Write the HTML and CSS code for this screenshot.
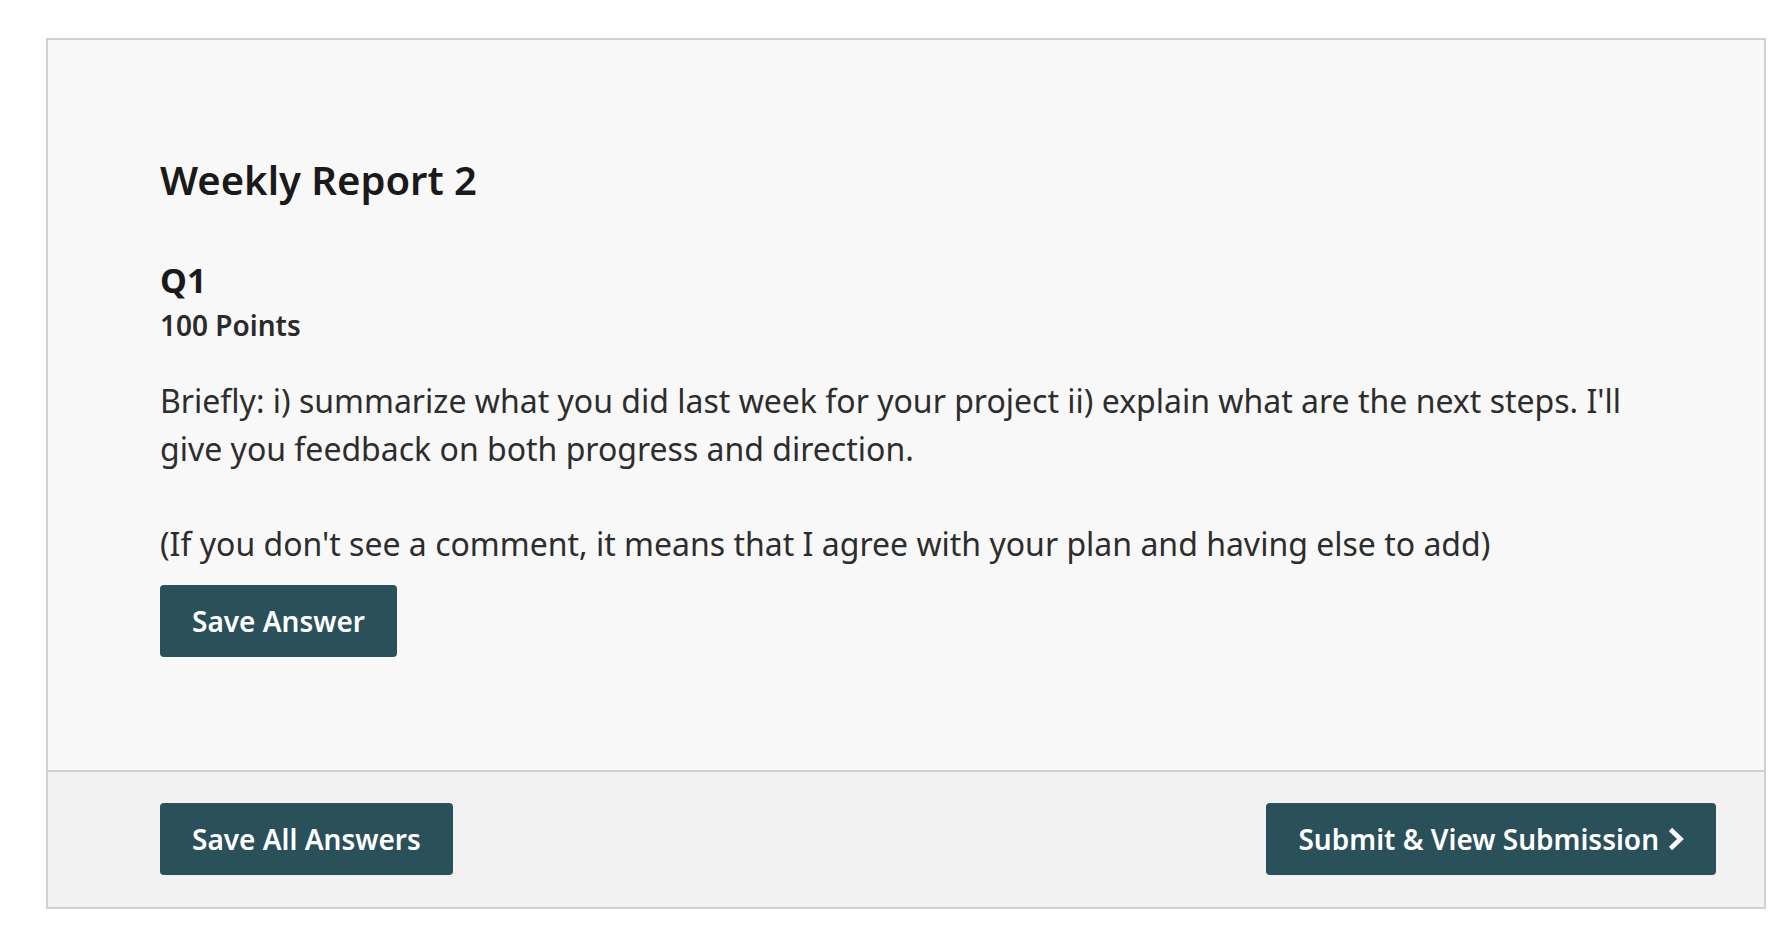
FILE: index.html
```html
<!DOCTYPE html>
<html lang="en">
<head>
<meta charset="utf-8">
<title>Weekly Report 2</title>
<link rel="stylesheet" href="styles.css">
</head>
<body>
<main class="card">
  <section class="card-body">
    <h1 class="title">Weekly Report 2</h1>
    <div class="question">
      <h2 class="q-title">Q1</h2>
      <div class="q-points">100 Points</div>
      <div class="q-prompt">
        <p>Briefly: i) summarize what you did last week for your project ii) explain what are the next steps. I'll give you feedback on both progress and direction.</p>
        <p>(If you don't see a comment, it means that I agree with your plan and having else to add)</p>
      </div>
      <button class="btn" type="button">Save Answer</button>
    </div>
  </section>
  <footer class="card-footer">
    <button class="btn" type="button">Save All Answers</button>
    <button class="btn" type="button">Submit &amp; View Submission
      <svg class="chev" viewBox="0 0 16 24" aria-hidden="true"><path d="M2.5 2.5 L12.5 12 L2.5 21.5" fill="none" stroke="#fff" stroke-width="4.6" stroke-linecap="butt" stroke-linejoin="miter"/></svg>
    </button>
  </footer>
</main>
</body>
</html>
```

FILE: styles.css
```css
html, body {
  margin: 0;
  padding: 0;
  background: #ffffff;
}

body {
  font-family: "Noto Sans", "Open Sans", "Liberation Sans", sans-serif;
  color: #2d2d2d;
}

.card {
  margin: 38px 0 0 46px;
  width: 1720px;
  box-sizing: border-box;
  border: 2px solid #d0d0d0;
  background: #f8f8f8;
}

.card-body {
  padding: 116px 112px 113px 112px;
}

.title {
  margin: 0;
  font-size: 40px;
  line-height: 48px;
  font-weight: 600;
  color: #1a1a1a;
}

.question {
  margin-top: 56px;
}

.q-title {
  margin: 0;
  font-size: 34px;
  line-height: 40px;
  font-weight: 700;
  color: #1a1a1a;
}

.q-points {
  margin-top: 8px;
  font-size: 28px;
  line-height: 34px;
  font-weight: 600;
  color: #2a2a2a;
}

.q-prompt {
  margin-top: 35px;
  font-size: 32px;
  line-height: 48px;
  color: #2d2d2d;
}

.q-prompt p {
  margin: 0 0 47px 0;
}

.q-prompt p:last-child {
  margin-bottom: 0;
}

.btn {
  display: inline-flex;
  align-items: center;
  gap: 9px;
  margin-top: 17px;
  height: 72px;
  padding: 0 32px;
  border: 0;
  border-radius: 4px;
  background: #2a505a;
  color: #ffffff;
  font-family: "Noto Sans", "Open Sans", "Liberation Sans", sans-serif;
  font-size: 28px;
  font-weight: 600;
  cursor: pointer;
}

.card-footer {
  display: flex;
  justify-content: space-between;
  align-items: center;
  padding: 31px 48px 32px 112px;
  border-top: 2px solid #d0d0d0;
  background: #f2f2f2;
}

.card-footer .btn {
  margin-top: 0;
}

.chev {
  width: 16px;
  height: 24px;
}
```
